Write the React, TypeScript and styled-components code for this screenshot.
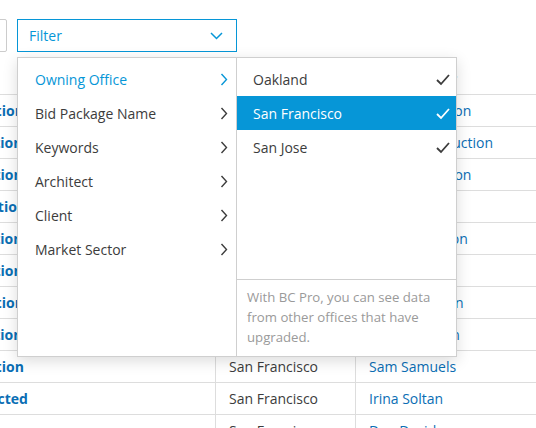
import React from 'react';
import styled, { createGlobalStyle } from 'styled-components';

const GlobalStyle = createGlobalStyle`
  html, body {
    margin: 0;
    padding: 0;
    background: #fff;
    overflow: hidden;
  }
  body {
    font-family: 'Open Sans', 'Noto Sans', sans-serif;
    font-size: 14px;
    color: #3c3c3c;
  }
`;

const BLUE = '#0696d7';
const LINK = '#0a6eb4';

const Page = styled.div`
  position: relative;
  width: 536px;
  height: 428px;
  overflow: hidden;
`;

const Toolbar = styled.div`
  display: flex;
  align-items: flex-start;
  gap: 10px;
  height: 63px;
  box-sizing: border-box;
  padding-top: 19px;
`;

const SearchBox = styled.div`
  width: 200px;
  height: 33px;
  margin-left: -193px;
  box-sizing: border-box;
  border: 1px solid #cccccc;
  border-radius: 2px;
`;

const FilterWrap = styled.div`
  position: relative;
  width: 220px;
`;

const FilterButton = styled.div`
  display: flex;
  align-items: center;
  justify-content: space-between;
  height: 33px;
  box-sizing: border-box;
  padding: 0 13px 0 11px;
  border: 1px solid ${BLUE};
  color: ${BLUE};
  font-size: 14px;
`;

const Dropdown = styled.div`
  position: absolute;
  top: 38px;
  left: 0;
  z-index: 2;
  display: flex;
  width: 440px;
  height: 300px;
  box-sizing: border-box;
  background: #fff;
  border: 1px solid #cfcfcf;
  box-shadow: 0 4px 14px rgba(0, 0, 0, 0.14);
`;

const CategoryPane = styled.div`
  width: 219px;
  box-sizing: border-box;
  padding-top: 4px;
  border-right: 1px solid #cfcfcf;
`;

const Category = styled.div<{ $active?: boolean }>`
  display: flex;
  align-items: center;
  justify-content: space-between;
  height: 34px;
  padding: 0 8px 0 17px;
  color: ${(p) => (p.$active ? BLUE : '#3c3c3c')};
  font-size: 14px;
`;

const OptionPane = styled.div`
  flex: 1;
  display: flex;
  flex-direction: column;
`;

const OptionList = styled.div`
  flex: 1;
  padding-top: 4px;
`;

const Option = styled.div<{ $selected?: boolean }>`
  display: flex;
  align-items: center;
  justify-content: space-between;
  height: 34px;
  padding: 0 5px 0 16px;
  background: ${(p) => (p.$selected ? BLUE : 'transparent')};
  color: ${(p) => (p.$selected ? '#fff' : '#3c3c3c')};
  font-size: 14px;
`;

const Note = styled.div`
  border-top: 1px solid #cfcfcf;
  padding: 7px 12px 9px 10px;
  color: #9a9a9a;
  font-size: 13.2px;
  line-height: 20px;
`;

const Table = styled.div`
  margin-left: -127px;
`;

const Row = styled.div<{ $header?: boolean }>`
  display: grid;
  grid-template-columns: 343px 140px 1fr;
  height: 32px;
  box-sizing: border-box;
  border-bottom: 1px solid #dddddd;
  font-weight: ${(p) => (p.$header ? 700 : 400)};
`;

const Cell = styled.div<{ $kind?: 'name' | 'link' | 'text' }>`
  display: flex;
  align-items: center;
  padding-left: 13px;
  white-space: nowrap;
  overflow: hidden;
  border-right: 1px solid #dddddd;
  color: ${(p) => (p.$kind === 'name' || p.$kind === 'link' ? LINK : '#3c3c3c')};
  font-weight: ${(p) => (p.$kind === 'name' ? 700 : 'inherit')};
  &:last-child {
    border-right: none;
  }
`;

const Chevron = ({ color = '#3c3c3c' }: { color?: string }) => (
  <svg width="8" height="13" viewBox="0 0 8 13">
    <polyline points="1.5,1 6.5,6.5 1.5,12" fill="none" stroke={color} strokeWidth="1.4" />
  </svg>
);

const ChevronDown = () => (
  <svg width="13" height="8" viewBox="0 0 13 8">
    <polyline points="1,1 6.5,6.5 12,1" fill="none" stroke={BLUE} strokeWidth="1.5" />
  </svg>
);

const Check = ({ color }: { color: string }) => (
  <svg width="16" height="13" viewBox="0 0 16 13">
    <polyline points="2,7 6,11 14,2" fill="none" stroke={color} strokeWidth="1.8" />
  </svg>
);

const categories = ['Owning Office', 'Bid Package Name', 'Keywords', 'Architect', 'Client', 'Market Sector'];
const offices = ['Oakland', 'San Francisco', 'San Jose'];

const rows = [
  { name: 'Tower Construction', office: 'San Francisco', person: 'Gary Robertson' },
  { name: 'Arena Construction', office: 'San Francisco', person: 'Acme Construction' },
  { name: 'Depot Construction', office: 'San Francisco', person: 'Kevin Anderson' },
  { name: 'Tower B Renovation', office: 'San Francisco', person: '' },
  { name: 'Arena Construction', office: 'San Francisco', person: 'Lisa Thompson' },
  { name: 'Depot Construction', office: 'San Francisco', person: '' },
  { name: 'Tower Construction', office: 'San Francisco', person: 'Sean Donovan' },
  { name: 'Arena Construction', office: 'San Francisco', person: 'Megan Jordan' },
  { name: 'Tower Construction', office: 'San Francisco', person: 'Sam Samuels' },
  { name: 'Project Not Selected', office: 'San Francisco', person: 'Irina Soltan' },
  { name: 'Plaza Construction', office: 'San Francisco', person: 'Dan Davidson' },
];

export default function App() {
  return (
    <Page>
      <GlobalStyle />
      <Toolbar>
        <SearchBox />
        <FilterWrap>
          <FilterButton>
            Filter
            <ChevronDown />
          </FilterButton>
          <Dropdown>
            <CategoryPane>
              {categories.map((c, i) => (
                <Category key={c} $active={i === 0}>
                  {c}
                  <Chevron color={i === 0 ? BLUE : '#3c3c3c'} />
                </Category>
              ))}
            </CategoryPane>
            <OptionPane>
              <OptionList>
                {offices.map((o) => (
                  <Option key={o} $selected={o === 'San Francisco'}>
                    {o}
                    <Check color={o === 'San Francisco' ? '#fff' : '#3c3c3c'} />
                  </Option>
                ))}
              </OptionList>
              <Note>With BC Pro, you can see data from other offices that have upgraded.</Note>
            </OptionPane>
          </Dropdown>
        </FilterWrap>
      </Toolbar>
      <Table>
        <Row $header>
          <Cell>Project Name</Cell>
          <Cell>Office</Cell>
          <Cell>Bid Manager</Cell>
        </Row>
        {rows.map((r, i) => (
          <Row key={i}>
            <Cell $kind="name">{r.name}</Cell>
            <Cell>{r.office}</Cell>
            <Cell $kind="link">{r.person}</Cell>
          </Row>
        ))}
      </Table>
    </Page>
  );
}
